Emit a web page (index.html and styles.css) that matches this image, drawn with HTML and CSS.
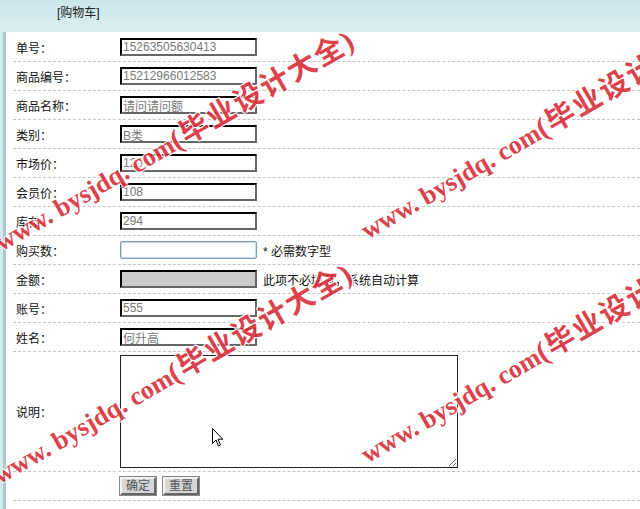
FILE: index.html
```html
<!DOCTYPE html>
<html lang="zh-CN">
<head>
<meta charset="utf-8">
<title>购物车</title>
<link rel="stylesheet" href="styles.css">
</head>
<body>
<div class="header">[购物车]</div>
<div class="panel">
  <form class="form">
    <div class="row"><div class="label">单号：</div><div class="field"><input class="txt" type="text" value="15263505630413" readonly></div></div>
    <div class="row"><div class="label">商品编号：</div><div class="field"><input class="txt" type="text" value="15212966012583" readonly></div></div>
    <div class="row"><div class="label">商品名称：</div><div class="field"><input class="txt" type="text" value="请问请问额" readonly></div></div>
    <div class="row"><div class="label">类别：</div><div class="field"><input class="txt" type="text" value="B类" readonly></div></div>
    <div class="row"><div class="label">市场价：</div><div class="field"><input class="txt" type="text" value="120" readonly></div></div>
    <div class="row"><div class="label">会员价：</div><div class="field"><input class="txt" type="text" value="108" readonly></div></div>
    <div class="row"><div class="label">库存：</div><div class="field"><input class="txt" type="text" value="294" readonly></div></div>
    <div class="row"><div class="label">购买数：</div><div class="field"><input class="txt focus" type="text" value=""><span class="hint">* 必需数字型</span></div></div>
    <div class="row"><div class="label">金额：</div><div class="field"><input class="txt gray" type="text" value="" readonly><span class="hint">此项不必填写，系统自动计算</span></div></div>
    <div class="row"><div class="label">账号：</div><div class="field"><input class="txt" type="text" value="555" readonly></div></div>
    <div class="row"><div class="label">姓名：</div><div class="field"><input class="txt" type="text" value="何升高" readonly></div></div>
    <div class="row tall"><div class="label">说明：</div><div class="field"><textarea class="area"></textarea></div></div>
    <div class="row"><div class="label"></div><div class="field btns"><button class="btn" type="button">确定</button><button class="btn" type="button">重置</button></div></div>
  </form>
</div>
<svg class="cursor" width="12" height="19" viewBox="0 0 12 19"><path d="M0.5 0.5 L0.5 15.5 L4 12 L6.5 18 L8.5 17 L6 11.2 L10.8 11.2 Z" fill="#fff" stroke="#000" stroke-width="1"/></svg>
<div class="wm wm1">www. bysjdq. com<span class="cj">(毕业设计大全)</span></div>
<div class="wm wm2">www. bysjdq. com<span class="cj">(毕业设计大全)</span></div>
<div class="wm wm3">www. bysjdq. com<span class="cj">(毕业设计大全)</span></div>
<div class="wm wm4">www. bysjdq. com<span class="cj">(毕业设计大全)</span></div>
</body>
</html>
```
FILE: styles.css
```css
html, body {
  margin: 0;
  padding: 0;
}
body {
  background: #d3ebee;
  font-family: "Liberation Sans", "Noto Sans CJK SC", sans-serif;
  font-size: 12px;
  color: #111;
  width: 640px;
  height: 509px;
  overflow: hidden;
  position: relative;
}
.header {
  height: 32px;
  line-height: 27px;
  padding-left: 57px;
  color: #222;
  background: linear-gradient(#cbe6ea, #dcf0f2);
}
.panel {
  margin-left: 3px;
  border-left: 3px solid #a9c8cd;
  background: #fff;
  height: 477px;
  padding-top: 1px;
  box-sizing: border-box;
}
.form {
  margin: 0 0 0 7px;
}
.row {
  display: grid;
  grid-template-columns: 107px 1fr;
  align-items: center;
  height: 28px;
  border-bottom: 1px dashed #c4c4c4;
}
.row.tall {
  height: 119px;
}
.label {
  padding-left: 3px;
  color: #111;
}
.field {
  display: flex;
  align-items: center;
}
.txt {
  box-sizing: border-box;
  width: 137px;
  height: 18px;
  margin: 0;
  padding: 0 1px;
  border: 2px inset #777;
  border-top-color: #333;
  border-left-color: #333;
  border-right-color: #666;
  border-bottom-color: #666;
  background: #fff;
  color: #7a7a7a;
  font-family: "Liberation Sans", "Noto Sans CJK SC", sans-serif;
  font-size: 12px;
  outline: none;
}
.txt.focus {
  border: 1px solid #7f9db9;
  box-shadow: inset 0 0 0 1px #c9d8ea;
  border-radius: 2px;
}
.txt.gray {
  background: #cccccc;
}
.hint {
  margin-left: 6px;
  color: #111;
}
.area {
  box-sizing: border-box;
  width: 338px;
  height: 113px;
  margin: 0;
  border: 1px solid #222;
  outline: none;
  background: #fff;
  resize: both;
}
.btns {
  gap: 6px;
}
.btn {
  box-sizing: border-box;
  width: 36px;
  height: 18px;
  margin: 0;
  padding: 0;
  border: 2px solid #777;
  border-top-color: #f2f2f2;
  border-left-color: #f2f2f2;
  border-right-color: #666;
  border-bottom-color: #666;
  box-shadow: 0 0 0 1px #888;
  background: #d6d6d6;
  color: #555;
  font-family: "Liberation Sans", "Noto Sans CJK SC", sans-serif;
  font-size: 12px;
  line-height: 14px;
}
.btn + .btn {
  margin-left: 1px;
}
.cursor {
  position: absolute;
  left: 212px;
  top: 428px;
}
.wm {
  position: absolute;
  white-space: nowrap;
  font-family: "Liberation Serif", "Noto Sans CJK SC", serif;
  font-weight: bold;
  font-size: 26px;
  line-height: 26px;
  color: #d8323c;
  text-shadow: 1px 1px 0 #fff, -1px -1px 0 #fff, 1px -1px 0 #fff, -1px 1px 0 #fff;
  transform-origin: 0 100%;
  transform: rotate(-30deg);
  opacity: 0.92;
}
.wm .cj {
  font-size: 29px;
  letter-spacing: 2px;
}
.wm1 { left: 4px; top: 228px; }
.wm2 { left: 2px; top: 461px; }
.wm3 { left: 370px; top: 216px; }
.wm4 { left: 370px; top: 440px; }
```
